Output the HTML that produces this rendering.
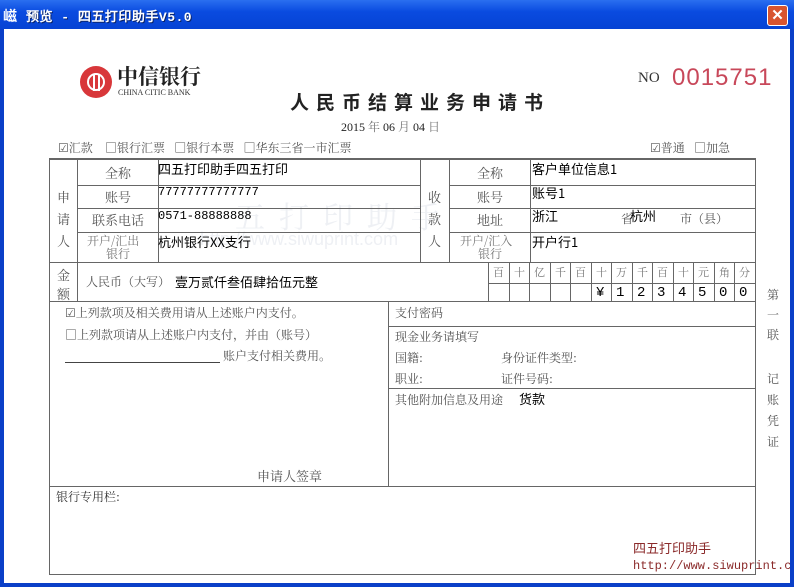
<!DOCTYPE html>
<html><head><meta charset="utf-8">
<style>
*{margin:0;padding:0;box-sizing:border-box}
body{width:794px;height:587px;overflow:hidden;background:#0a3fc8;font-family:"Liberation Sans","Noto Sans CJK SC",sans-serif;position:relative}
.tb{position:absolute;left:0;top:0;width:794px;height:29px;background:linear-gradient(#2a6ff0,#0a4be0 40%,#0643d4);}
.tt{position:absolute;left:26px;top:6px;color:#fff;font-weight:bold;font-size:13px;font-family:"Liberation Mono","WenQuanYi Zen Hei",monospace;letter-spacing:0.5px;text-shadow:1px 1px #0a246a}
.ico{position:absolute;left:3px;top:6px;color:#fff;font-size:14px;font-weight:bold}
.x{position:absolute;left:767px;top:5px;width:21px;height:21px;background:#d8542f;border:1px solid #fff;border-radius:3px;color:#fff;font-size:15px;text-align:center;line-height:19px;font-weight:bold}
.client{position:absolute;left:4px;top:29px;width:786px;height:554px;background:#fff}
.a{position:absolute;white-space:nowrap;line-height:1}
.l{position:absolute;background:#666}
.h{height:1px}.v{width:1px}
.g{color:#555;font-size:12px;font-family:"Noto Serif CJK SC","Liberation Serif",serif}
.k{color:#000;font-size:13px;font-family:"WenQuanYi Zen Hei","Noto Sans CJK SC",sans-serif}
</style></head><body>
<div class="tb"></div>
<div class="ico">嵫</div>
<div class="tt">预览 - 四五打印助手V5.0</div>
<div class="x">✕</div>
<div class="client"></div>

<!-- logo -->
<div class="a" style="left:80px;top:66px;width:32px;height:32px;border-radius:50%;background:#d8373a"></div>
<div class="a" style="left:87px;top:73px;width:18px;height:18px;border-radius:50%;border:2px solid #fff"></div>
<div class="a" style="left:93px;top:74px;width:2px;height:17px;background:#fff"></div>
<div class="a" style="left:98px;top:74px;width:2px;height:17px;background:#fff"></div>
<div class="a" style="left:117px;top:66px;font-size:21px;font-weight:bold;color:#222;font-family:'Noto Serif CJK SC',serif">中信银行</div>
<div class="a" style="left:118px;top:89px;font-size:8px;color:#333;font-family:'Liberation Serif',serif">CHINA CITIC BANK</div>
<div class="a" style="left:290px;top:92px;font-size:19px;font-weight:bold;color:#222;letter-spacing:7px;font-family:'Noto Sans CJK SC',sans-serif">人民币结算业务申请书</div>
<div class="a" style="left:638px;top:71px;font-size:15px;color:#333;font-family:'Liberation Serif',serif">NO</div>
<div class="a" style="left:672px;top:66px;font-size:24px;color:#c8485a;letter-spacing:1px">0015751</div>
<div class="a" style="left:341px;top:121px;font-size:12px;color:#222;font-family:'Liberation Serif','Noto Serif CJK SC',serif">2015 <span style="color:#777">年</span> 06 <span style="color:#777">月</span> 04 <span style="color:#777">日</span></div>
<div class="a g" style="left:58px;top:142px">☑汇款 &nbsp;&nbsp;&nbsp;□银行汇票 &nbsp;&nbsp;□银行本票 &nbsp;&nbsp;□华东三省一市汇票</div>
<div class="a g" style="left:650px;top:142px">☑普通 &nbsp;&nbsp;□加急</div>

<!-- watermark -->
<div class="a" style="left:235px;top:200px;font-size:30px;color:#eef0f4;letter-spacing:14px;font-family:'Noto Serif CJK SC',serif">五打印助手</div>
<div class="a" style="left:200px;top:230px;font-size:18px;color:#eef0f4">http://www.siwuprint.com</div>

<!-- table lines -->
<div class="l h" style="left:49px;top:158px;width:707px;height:2px"></div>
<div class="l h" style="left:77px;top:185px;width:343px"></div>
<div class="l h" style="left:77px;top:208px;width:343px"></div>
<div class="l h" style="left:77px;top:232px;width:343px"></div>
<div class="l h" style="left:449px;top:185px;width:306px"></div>
<div class="l h" style="left:449px;top:208px;width:306px"></div>
<div class="l h" style="left:449px;top:232px;width:306px"></div>
<div class="l h" style="left:49px;top:262px;width:707px"></div>
<div class="l h" style="left:488px;top:283px;width:267px"></div>
<div class="l h" style="left:49px;top:301px;width:707px"></div>
<div class="l h" style="left:388px;top:326px;width:367px"></div>
<div class="l h" style="left:388px;top:388px;width:367px"></div>
<div class="l h" style="left:49px;top:486px;width:707px"></div>
<div class="l h" style="left:49px;top:574px;width:707px"></div>
<div class="l v" style="left:49px;top:158px;height:417px"></div>
<div class="l v" style="left:755px;top:158px;height:417px"></div>
<div class="l v" style="left:77px;top:158px;height:144px"></div>
<div class="l v" style="left:158px;top:158px;height:104px"></div>
<div class="l v" style="left:420px;top:158px;height:104px"></div>
<div class="l v" style="left:449px;top:158px;height:104px"></div>
<div class="l v" style="left:530px;top:158px;height:104px"></div>
<div class="l v" style="left:388px;top:301px;height:186px"></div>
<div id="grid"></div>

<!-- left labels -->
<div class="a g" style="left:57px;top:186px;line-height:22px;width:14px;white-space:normal;font-size:13px">申请人</div>
<div class="a g" style="left:57px;top:265px;line-height:19px;width:14px;white-space:normal;font-size:13px">金额</div>
<div class="a g" style="left:105px;top:166px;font-size:13px">全称</div>
<div class="a g" style="left:105px;top:190px;font-size:13px">账号</div>
<div class="a g" style="left:92px;top:213px;font-size:13px">联系电话</div>
<div class="a g" style="left:87px;top:235px;font-size:12px;color:#777">开户/汇出</div>
<div class="a g" style="left:106px;top:248px;font-size:12px;color:#777">银行</div>
<div class="a k" style="left:158px;top:162px">四五打印助手四五打印</div>
<div class="a k" style="left:158px;top:186px;font-family:'Liberation Mono',monospace;font-size:12px">77777777777777</div>
<div class="a k" style="left:158px;top:210px;font-family:'Liberation Mono',monospace;font-size:12px">0571-88888888</div>
<div class="a k" style="left:158px;top:235px">杭州银行XX支行</div>
<div class="a g" style="left:86px;top:276px;font-size:12px">人民币（大写）</div>
<div class="a k" style="left:175px;top:275px">壹万贰仟叁佰肆拾伍元整</div>

<!-- right labels -->
<div class="a g" style="left:428px;top:186px;line-height:22px;width:14px;white-space:normal;font-size:13px">收款人</div>
<div class="a g" style="left:477px;top:166px;font-size:13px">全称</div>
<div class="a g" style="left:477px;top:190px;font-size:13px">账号</div>
<div class="a g" style="left:477px;top:213px;font-size:13px">地址</div>
<div class="a g" style="left:460px;top:235px;font-size:12px;color:#777">开户/汇入</div>
<div class="a g" style="left:478px;top:248px;font-size:12px;color:#777">银行</div>
<div class="a k" style="left:532px;top:162px">客户单位信息1</div>
<div class="a k" style="left:532px;top:186px">账号1</div>
<div class="a k" style="left:532px;top:209px">浙江</div>
<div class="a g" style="left:621px;top:213px">省</div>
<div class="a k" style="left:630px;top:209px">杭州</div>
<div class="a g" style="left:680px;top:213px">市（县）</div>
<div class="a k" style="left:532px;top:235px">开户行1</div>

<!-- middle -->
<div class="a g" style="left:65px;top:307px;font-size:12px">☑上列款项及相关费用请从上述账户内支付。</div>
<div class="a g" style="left:65px;top:329px;font-size:12px">□上列款项请从上述账户内支付，并由（账号）</div>
<div class="l h" style="left:65px;top:362px;width:155px;background:#444"></div>
<div class="a g" style="left:223px;top:350px;font-size:12px">账户支付相关费用。</div>
<div class="a g" style="left:257px;top:469px;font-size:13px">申请人签章</div>
<div class="a g" style="left:395px;top:307px;font-size:12px">支付密码</div>
<div class="a g" style="left:395px;top:331px;font-size:12px">现金业务请填写</div>
<div class="a g" style="left:395px;top:352px;font-size:12px">国籍:</div>
<div class="a g" style="left:501px;top:352px;font-size:12px">身份证件类型:</div>
<div class="a g" style="left:395px;top:373px;font-size:12px">职业:</div>
<div class="a g" style="left:501px;top:373px;font-size:12px">证件号码:</div>
<div class="a g" style="left:395px;top:394px;font-size:12px">其他附加信息及用途</div>
<div class="a k" style="left:519px;top:392px">货款</div>
<div class="a g" style="left:56px;top:491px;font-size:12px;color:#333">银行专用栏:</div>

<!-- side -->
<div class="a g" style="left:767px;top:285px;width:14px;white-space:normal;line-height:20px;font-size:12px">第<br>一<br>联</div>
<div class="a g" style="left:767px;top:368px;width:14px;white-space:normal;line-height:21px;font-size:12px">记<br>账<br>凭<br>证</div>

<!-- bottom watermark text -->
<div class="a" style="left:633px;top:542px;font-size:13px;color:#8b2a2a;font-family:'WenQuanYi Zen Hei',sans-serif">四五打印助手</div>
<div class="a" style="left:633px;top:560px;font-size:12px;color:#8b2a2a;font-family:'Liberation Mono',monospace;width:157px;overflow:hidden">http://www.siwuprint.com</div>

<div style="position:absolute;left:0;top:29px;width:4px;height:558px;background:#0a3fc8"></div>
<div style="position:absolute;left:790px;top:29px;width:4px;height:558px;background:#0a3fc8"></div>
<div style="position:absolute;left:0;top:583px;width:794px;height:4px;background:#0a3fc8"></div>

<script>
var h='',units=['百','十','亿','千','百','十','万','千','百','十','元','角','分'],d=['','','','','','¥','1','2','3','4','5','0','0'];
for(var i=0;i<13;i++){var x=488+i*20.5;
h+='<div class="l v" style="left:'+Math.round(x)+'px;top:262px;height:40px"></div>';
h+='<div class="a g" style="left:'+Math.round(x+5)+'px;top:267px;font-size:11px;color:#777">'+units[i]+'</div>';
h+='<div class="a" style="left:'+Math.round(x+5)+'px;top:286px;font-size:14px;font-family:\'Liberation Mono\',monospace">'+d[i]+'</div>';}
document.getElementById('grid').innerHTML=h;
</script>
</body></html>
